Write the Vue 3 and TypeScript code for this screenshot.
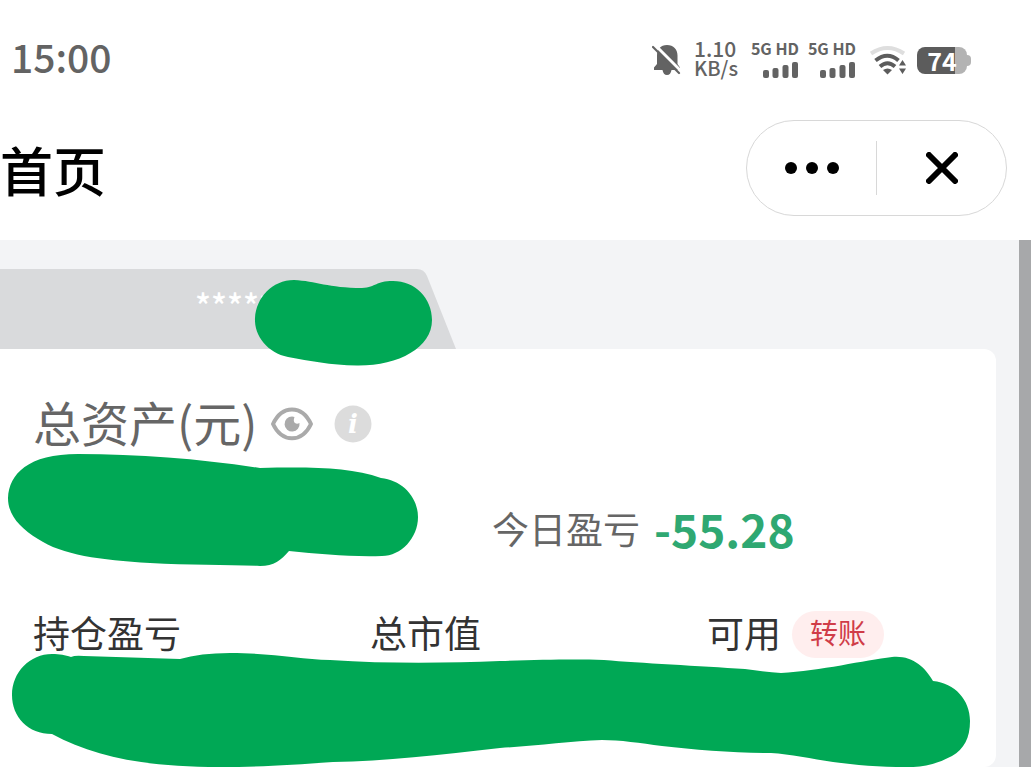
<script setup lang="ts">
interface Metric {
  label: string
  action?: string
}

const simCards: string[] = ['5G HD', '5G HD']
const metrics: Metric[] = [
  { label: '持仓盈亏' },
  { label: '总市值' },
  { label: '可用', action: '转账' },
]
</script>

<template>
  <div class="page">
    <div class="status">
      <span class="clock">15:00</span>
      <div class="indicators">
        <svg class="bell" viewBox="0 0 30 32" aria-hidden="true">
          <path d="M15 1C8.500 1 5 5.500 5 11.500V20L2 23.500V26h8.500c.5 3 2 5 4.500 5s4-2 4.500-5H28v-2.500L25.500 20v-8.500C25.500 5.500 21.500 1 15 1z" fill="#636363" />
          <path d="M3 1 29 27" stroke="#fff" stroke-width="3" />
          <path d="M1 3 27 29" stroke="#636363" stroke-width="2.200" stroke-linecap="round" />
        </svg>
        <div class="speed"><span>1.10</span><span class="unit">KB/s</span></div>
        <div class="sims">
          <div v-for="(sim, i) in simCards" :key="i" class="sim">
            <span>{{ sim }}</span>
            <svg viewBox="0 0 36 17" aria-hidden="true">
              <rect x="0" y="9" width="6" height="8" rx="2" />
              <rect x="9.500" y="7" width="6" height="10" rx="2" />
              <rect x="19.500" y="4" width="6" height="13" rx="2" />
              <rect x="29" y="1" width="6" height="16" rx="2" />
            </svg>
          </div>
        </div>
        <svg class="wifi" viewBox="0 0 38 30" aria-hidden="true">
          <g fill="none" stroke-width="4">
            <path d="M2 8.500Q18.500-2.500 35 8.500" stroke="#dedede" />
            <path d="M6.500 15.500Q18.500 6 29.500 15.500" stroke="#5c5c5c" />
            <path d="M11 21.500Q18.500 15 26 21.500" stroke="#5c5c5c" />
          </g>
          <path d="M14 25q4.500-3 9 0L18.500 29.500z" fill="#5c5c5c" />
          <path d="M33.500 15l3.500 5.500h-7zM33.500 29l3.500-5.500h-7z" fill="#5c5c5c" />
        </svg>
        <div class="battery"><span>74</span></div>
      </div>
    </div>

    <header class="header">
      <h1>首页</h1>
      <div class="capsule">
        <button type="button" aria-label="更多">
          <svg class="dots" viewBox="0 0 56 14"><circle cx="7" cy="7" r="6" /><circle cx="28" cy="7" r="6" /><circle cx="49" cy="7" r="6" /></svg>
        </button>
        <button type="button" aria-label="关闭">
          <svg class="close" viewBox="0 0 32 32"><path d="M3 3 29 29M29 3 3 29" /></svg>
        </button>
      </div>
    </header>

    <main class="content">
      <div class="account">
        <svg class="account-bg" viewBox="0 0 456 80" aria-hidden="true">
          <path d="M0 0H417Q424 0 427 7L456 80H0z" fill="#d9dadc" />
        </svg>
        <span class="mask">*****</span>
        <svg class="ink ink-account" viewBox="254 279 179 88" aria-hidden="true">
          <path d="M255 318C256 298 272 280 294 280C316 281 328 288 362 288C377 287 375 281 393 281C415 281 432 298 432 320C432 348 398 366 357 365.500C330 365 310 361 288 357C268 353 254 336 255 318Z" />
        </svg>
      </div>

      <section class="card">
        <div class="title">
          <h2>总资产(元)</h2>
          <button type="button" aria-label="显示或隐藏金额">
            <svg class="eye" viewBox="0 0 44 36">
              <path d="M3 18C12 -1.500 32 -1.500 41 18C32 37 12 37 3 18Z" fill="none" stroke="#aaa" stroke-width="4" stroke-linejoin="round" />
              <path d="M22 10.500a7.500 7.500 0 1 0 7.500 6.500c-2.500 1.500-5 .5-5.500-1.500-.5-1.500 0-2.500 .5-4.500q-1-.5-2.500-.5z" fill="#aaa" />
            </svg>
          </button>
          <button type="button" aria-label="说明">
            <svg class="info" viewBox="0 0 38 38">
              <circle cx="19" cy="19" r="18.500" fill="#dcdcdc" />
              <text x="19" y="28" text-anchor="middle">i</text>
            </svg>
          </button>
        </div>

        <div class="today">
          <span>今日盈亏</span>
          <strong>-55.28</strong>
        </div>

        <div class="metrics">
          <div v-for="metric in metrics" :key="metric.label" class="metric">
            <span class="metric-label">{{ metric.label }}</span>
            <button v-if="metric.action" type="button" class="transfer">{{ metric.action }}</button>
          </div>
        </div>

        <svg class="ink ink-total" viewBox="7 453 412 114" aria-hidden="true">
          <path d="M8 498C9 474 28 454 78 454C140 454 200 459 260 468C310 467 350 467 381 478C402 480 418 497 418 517C418 538 401 556 382 556C350 557 320 554 289 551C281 560 274 566 260 566C230 565 190 565 150 563C100 560 62 555 38 539C20 528 8 515 8 498Z" />
        </svg>
        <svg class="ink ink-metrics" viewBox="11 652 960 116" aria-hidden="true">
          <path d="M12 695C12 672 30 654 52 654C60 654 65 655 71 657Q75 655 84 656L180 659Q200 653 230 653C270 653 300 659 330 660C390 664 450 663 500 661C540 660 570 659 604 660C640 663 700 666 745 669C758 671 770 672 781 673C820 671 865 660 892 657C912 655 925 667 933 681C955 683 970 700 970 721C970 738 964 749 952 756Q930 768 906 767C880 767 855 765 833 762C812 759 790 754 771 753C735 753 695 750 662 746C640 743 620 740 602 740C570 741 535 746 500 748C440 755 385 761 333 762C290 765 260 767 220 767C145 767 95 757 52 734C28 734 12 717 12 695Z" />
        </svg>
      </section>
    </main>
  </div>
</template>

<style>
body {
  margin: 0;
  background: #fff;
}
</style>

<style scoped>
.page {
  display: flex;
  flex-direction: column;
  min-height: 100vh;
  overflow: hidden;
  font-family: "Noto Sans CJK SC", "Noto Sans", sans-serif;
  color: #333;
}
svg {
  display: block;
}
button {
  padding: 0;
  border: 0;
  background: none;
  font-family: inherit;
  cursor: pointer;
}
h1, h2 {
  margin: 0;
}
.status {
  display: flex;
  align-items: center;
  justify-content: space-between;
  height: 120px;
  padding: 0 60px 0 11px;
  box-sizing: border-box;
  color: #636363;
}
.clock {
  padding-bottom: 8px;
  font-size: 39px;
  font-weight: 500;
}
.indicators {
  display: flex;
  align-items: center;
}
.bell {
  width: 30px;
  height: 32px;
  margin-right: 12px;
}
.speed {
  display: flex;
  flex-direction: column;
  width: 44px;
  margin-right: 13px;
  padding-bottom: 5px;
  font-size: 21px;
  line-height: 19px;
  font-weight: 500;
}
.unit {
  font-size: 20px;
}
.sims {
  display: flex;
  gap: 9px;
}
.sim {
  display: flex;
  flex-direction: column;
  align-items: flex-end;
  gap: 8px;
  width: 48px;
  font-size: 16px;
  line-height: 10px;
  font-weight: 700;
  white-space: nowrap;
}
.sim svg {
  width: 36px;
  height: 17px;
  fill: #636363;
}
.wifi {
  width: 38px;
  height: 30px;
  margin: 0 10px 0 13px;
}
.battery {
  position: relative;
  width: 50px;
  height: 27px;
  margin-right: 4px;
  border-radius: 8px;
  background: linear-gradient(90deg, #5c5c5c 38px, #b3b3b3 38px);
  color: #fff;
  font-size: 25px;
  line-height: 26px;
  font-weight: 700;
  text-align: center;
}
.battery::after {
  content: "";
  position: absolute;
  left: 50px;
  top: 8px;
  width: 4px;
  height: 11px;
  border-radius: 0 4px 4px 0;
  background: #b3b3b3;
}
.header {
  display: flex;
  align-items: center;
  justify-content: space-between;
  height: 120px;
  padding: 0 24px 24px 0;
  box-sizing: border-box;
}
h1 {
  padding-top: 2px;
  color: #000;
  font-size: 53px;
  line-height: 94px;
  font-weight: 500;
}
.capsule {
  display: flex;
  align-items: center;
  width: 261px;
  height: 96px;
  box-sizing: border-box;
  border: 1px solid #d8d8d8;
  border-radius: 48px;
}
.capsule button {
  flex: 1;
  height: 54px;
  display: flex;
  align-items: center;
  justify-content: center;
}
.capsule button + button {
  border-left: 1px solid #d8d8d8;
}
.dots {
  width: 56px;
  height: 14px;
}
.close {
  width: 32px;
  height: 32px;
  fill: none;
  stroke: #000;
  stroke-width: 6;
  stroke-linecap: round;
}
.content {
  flex: 1;
  padding: 29px 23px 0 0;
  border-right: 12px solid #a7a8aa;
  background: #f3f4f6;
}
.account {
  position: relative;
  z-index: 1;
  width: 456px;
  height: 80px;
}
.account-bg {
  width: 456px;
  height: 80px;
}
.mask {
  position: absolute;
  left: 195px;
  top: 16px;
  color: #fff;
  font-size: 33px;
  line-height: 40px;
  font-weight: 500;
}
.card {
  position: relative;
  padding: 40px 32px 0 33px;
  min-height: 418px;
  box-sizing: border-box;
  border-radius: 0 12px 12px 0;
  background: #fff;
}
.title {
  display: flex;
  align-items: center;
  height: 70px;
}
h2 {
  margin-right: 13px;
  padding-bottom: 6px;
  color: #666;
  font-size: 48px;
  line-height: 64px;
  font-weight: 400;
}
.eye {
  width: 44px;
  height: 36px;
}
.info {
  width: 38px;
  height: 38px;
  margin-left: 20px;
}
.info text {
  fill: #fff;
  font: italic 700 26px "DejaVu Serif", serif;
}
.today {
  display: flex;
  align-items: center;
  gap: 14px;
  height: 60px;
  margin: 39px 0 0 459px;
  color: #666;
  font-size: 37px;
  white-space: nowrap;
}
.today strong {
  color: #2fa872;
  font-size: 46px;
  line-height: 60px;
}
.metrics {
  display: grid;
  grid-template-columns: 337px 337px 1fr;
  margin-top: 53px;
}
.metric {
  display: flex;
  align-items: center;
  gap: 11px;
  height: 47px;
  font-size: 37px;
  white-space: nowrap;
}
.metric-label {
  padding-bottom: 6px;
}
.transfer {
  width: 92px;
  height: 47px;
  padding-bottom: 5px;
  border-radius: 24px;
  background: #ffeeee;
  color: #d03c48;
  font-size: 28px;
  line-height: 40px;
}
.ink {
  position: absolute;
  fill: #00a855;
}
.ink-account {
  left: 254px;
  top: 10px;
  width: 179px;
  height: 88px;
}
.ink-total {
  left: 7px;
  top: 104px;
  width: 412px;
  height: 114px;
}
.ink-metrics {
  left: 11px;
  top: 303px;
  width: 960px;
  height: 116px;
}
</style>
